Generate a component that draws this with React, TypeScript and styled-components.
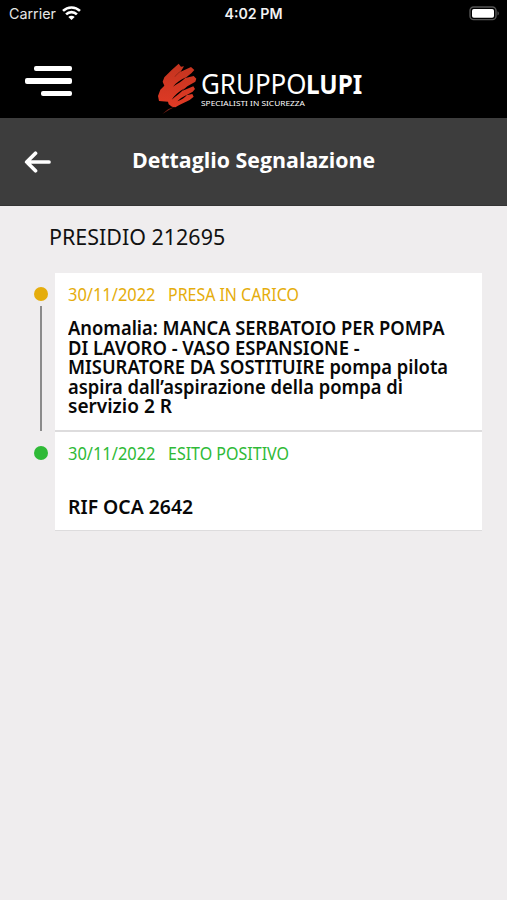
import React from 'react';
import styled, { createGlobalStyle } from 'styled-components';

const GlobalStyle = createGlobalStyle`
  * { box-sizing: border-box; }
  body { margin: 0; background: #efedee; }
`;

const Screen = styled.div`
  display: flex;
  flex-direction: column;
  min-height: 900px;
  background: #efedee;
  color: #111;
  font-family: 'Noto Sans', sans-serif;
`;

const StatusBar = styled.div`
  display: grid;
  grid-template-columns: 1fr auto 1fr;
  align-items: center;
  height: 27px;
  padding: 0 7px 0 9px;
  background: #000;
  color: #e6e6e6;
  font: 400 14.3px/27px Inter, sans-serif;
`;

const Carrier = styled.div`
  display: flex;
  align-items: center;
  gap: 6px;
`;

const Clock = styled.div`
  margin-right: 2px;
  color: #f2f2f2;
  font-weight: 600;
  font-size: 14.2px;
`;

const BatterySlot = styled.div`
  display: flex;
  justify-content: flex-end;
`;

const BrandBar = styled.header`
  display: flex;
  align-items: flex-start;
  height: 91px;
  padding-left: 25px;
  background: #000;
`;

const MenuButton = styled.button`
  display: flex;
  flex-direction: column;
  align-items: flex-end;
  gap: 7px;
  width: 47px;
  margin-top: 39px;
  padding: 0;
  border: 0;
  background: none;
`;

const MenuLine = styled.span<{ $width: number }>`
  width: ${(p) => p.$width}px;
  height: 5.4px;
  border-radius: 2px;
  background: #fff;
`;

const Brand = styled.div`
  display: flex;
  margin-left: 84px;
`;

const Mark = styled.svg`
  width: 45px;
  height: 56px;
  margin-top: 34px;
`;

const Wordmark = styled.div`
  display: flex;
  flex-direction: column;
  margin-top: 43px;
  color: #fff;
  white-space: nowrap;
`;

const Name = styled.div`
  display: flex;
  height: 27.5px;
  font-size: 27px;
  line-height: 28px;
`;

const Thin = styled.span`
  width: 104.5px;
  font-weight: 400;
  transform: scaleX(0.96);
  transform-origin: left;
`;

const Heavy = styled.span`
  font-weight: 700;
  transform: scaleX(0.9);
  transform-origin: left;
`;

const Tagline = styled.div`
  height: 10px;
  font-size: 7.8px;
  line-height: 10px;
  transform: scaleX(1.07);
  transform-origin: left;
`;

const TitleBar = styled.div`
  display: grid;
  grid-template-columns: 54px 1fr 54px;
  align-items: center;
  height: 88px;
  padding-bottom: 1px;
  background: #3d3d3d;
  border-bottom: 1px solid #343434;
`;

const BackButton = styled.button`
  display: flex;
  padding: 2px 0 0 24px;
  border: 0;
  background: none;
`;

const Title = styled.h1`
  margin: 0;
  padding-bottom: 5px;
  color: #fff;
  font: 700 22px/30px 'Open Sans', sans-serif;
  text-align: center;
  transform: scaleX(0.97);
`;

const Content = styled.main`
  padding: 15px 25px 0 34px;
`;

const Squeezed = styled.span<{ $scale: number }>`
  display: block;
  width: max-content;
  white-space: nowrap;
  transform: scaleX(${(p) => p.$scale});
  transform-origin: left;
`;

const Subject = styled.h2`
  margin: 0 0 22px;
  padding-left: 15px;
  font-weight: 400;
  font-size: 22px;
  line-height: 30px;
`;

const Event = styled.section<{ $height: number }>`
  display: grid;
  grid-template-columns: 21px 1fr;
  height: ${(p) => p.$height}px;
`;

const Rail = styled.div`
  display: flex;
  flex-direction: column;
  width: 14px;
  padding: 14px 0 1px;
  align-items: center;
`;

const Dot = styled.span<{ $color: string }>`
  flex: none;
  width: 14px;
  height: 14px;
  border-radius: 50%;
  background: ${(p) => p.$color};
`;

const Connector = styled.span`
  flex: 1;
  width: 2.4px;
  margin-top: 5px;
  background: #8b8b8b;
`;

const Card = styled.div<{ $last?: boolean }>`
  padding: 10px 13px 0;
  background: #fff;
  border-bottom: ${(p) => (p.$last ? 1 : 2)}px solid #dddcdd;
`;

const CardHead = styled.div<{ $color: string }>`
  display: grid;
  grid-template-columns: 100px 1fr;
  color: ${(p) => p.$color};
  font-size: 17.5px;
  line-height: 23px;
`;

const Note = styled.div<{ $gap: number }>`
  margin-top: ${(p) => p.$gap}px;
  color: #080808;
  font-weight: 600;
  font-size: 19.3px;
  line-height: 19.6px;
`;

type Line = [text: string, scale: number];

type EventData = {
  color: string;
  height: number;
  gap: number;
  date: Line;
  status: Line;
  lines: Line[];
};

const events: EventData[] = [
  {
    color: '#e5ad0c',
    height: 159,
    gap: 12,
    date: ['30/11/2022', 0.94],
    status: ['PRESA IN CARICO', 0.91],
    lines: [
      ['Anomalia: MANCA SERBATOIO PER POMPA', 0.951],
      ['DI LAVORO - VASO ESPANSIONE -', 0.954],
      ['MISURATORE DA SOSTITUIRE pompa pilota', 0.951],
      ['aspira dall’aspirazione della pompa di', 0.952],
      ['servizio 2 R', 0.988],
    ],
  },
  {
    color: '#2fba37',
    height: 99,
    gap: 32,
    date: ['30/11/2022', 0.94],
    status: ['ESITO POSITIVO', 0.915],
    lines: [['RIF OCA 2642', 1.005]],
  },
];

const WifiIcon = () => (
  <svg width="19" height="15" viewBox="0 0 19 15" fill="none" stroke="#fff" strokeWidth="2.6">
    <path d="M1 4.9C5.8.3 13.2.3 18 4.9" />
    <path d="M4.1 8.4c3-3 7.8-3 10.8 0" />
    <path d="M9.5 14 6.3 11c1.8-1.6 4.6-1.6 6.4 0z" fill="#fff" stroke="none" />
  </svg>
);

const BatteryIcon = () => (
  <svg width="31" height="15" viewBox="0 0 31 15">
    <rect x="1" y="1" width="26" height="12.6" rx="3.6" fill="none" stroke="#555" strokeWidth="1.4" />
    <rect x="3" y="3" width="22" height="8.7" rx="1.8" fill="#fff" />
    <path d="M28.5 5.2c1.8.7 1.8 3.6 0 4.3z" fill="#555" />
  </svg>
);

const BackIcon = () => (
  <svg width="28" height="22" viewBox="0 0 28 22" fill="none" stroke="#fff" strokeWidth="3.7" strokeLinecap="round" strokeLinejoin="round">
    <path d="M25 11H3M11.5 2.2 2.7 11l8.8 8.8" />
  </svg>
);

const BrushMark = () => (
  <Mark viewBox="18 18 135 168">
    <defs>
      <linearGradient id="brush" x1="0" y1="0" x2="0" y2="1">
        <stop offset="0" stopColor="#c3341f" />
        <stop offset="1" stopColor="#e03a25" />
      </linearGradient>
    </defs>
    <path
      fill="url(#brush)"
      d="M86 26 L93 35 L102 34 L92 50 L123 36 L133 45 L124 55 L106 69 L131 63 L139 71 L136 80 L112 94 L96 108 L130 94 L135 102 L128 110 L109 121 L127 117 L131 125 L119 135 L88 150 L76 157 L66 155 L56 148 L54 140 L27 138 L24 123 L31 104 L43 92 L38 80 L43 67 L65 45 Z"
    />
    <path d="M108 67 C94 73 78 84 69 95 C81 87 97 79 108 67 Z M104 100 C87 109 73 122 65 134 C80 122 91 115 104 100 Z M111 119 C97 126 88 132 82 139 C95 134 105 128 111 119 Z" fill="#000" />
    <path d="M92 49 C84 54 79 59 75 65" fill="none" stroke="#000" strokeWidth="1.5" opacity=".5" />
    <path d="M75 155 L55 162 L37 177 L58 164 Z" fill="#7c2116" />
  </Mark>
);

export default function App() {
  return (
    <Screen>
      <GlobalStyle />
      <StatusBar>
        <Carrier>
          Carrier
          <WifiIcon />
        </Carrier>
        <Clock>4:02 PM</Clock>
        <BatterySlot>
          <BatteryIcon />
        </BatterySlot>
      </StatusBar>
      <BrandBar>
        <MenuButton aria-label="Menu">
          <MenuLine $width={38.5} />
          <MenuLine $width={47} />
          <MenuLine $width={31} />
        </MenuButton>
        <Brand>
          <BrushMark />
          <Wordmark>
            <Name>
              <Thin>GRUPPO</Thin>
              <Heavy>LUPI</Heavy>
            </Name>
            <Tagline>SPECIALISTI IN SICUREZZA</Tagline>
          </Wordmark>
        </Brand>
      </BrandBar>
      <TitleBar>
        <BackButton aria-label="Indietro">
          <BackIcon />
        </BackButton>
        <Title>Dettaglio Segnalazione</Title>
      </TitleBar>
      <Content>
        <Subject>
          <Squeezed $scale={0.975}>PRESIDIO 212695</Squeezed>
        </Subject>
        {events.map((event, index) => {
          const last = index === events.length - 1;
          return (
            <Event key={event.status[0]} $height={event.height}>
              <Rail>
                <Dot $color={event.color} />
                {!last && <Connector />}
              </Rail>
              <Card $last={last}>
                <CardHead $color={event.color}>
                  <Squeezed $scale={event.date[1]}>{event.date[0]}</Squeezed>
                  <Squeezed $scale={event.status[1]}>{event.status[0]}</Squeezed>
                </CardHead>
                <Note $gap={event.gap}>
                  {event.lines.map(([text, scale]) => (
                    <Squeezed key={text} $scale={scale}>
                      {text}
                    </Squeezed>
                  ))}
                </Note>
              </Card>
            </Event>
          );
        })}
      </Content>
    </Screen>
  );
}
